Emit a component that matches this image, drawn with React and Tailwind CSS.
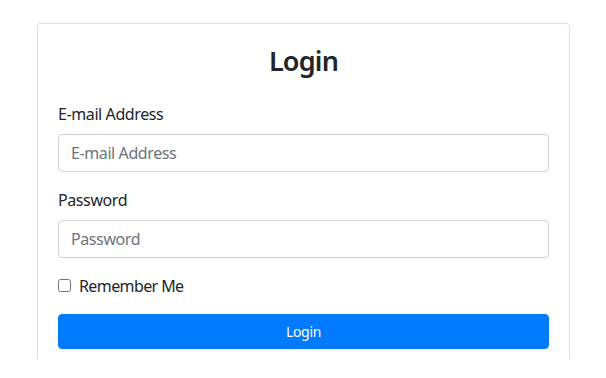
export default function App() {
  return (
    <div className="min-h-[378px] bg-white text-[#212529]" style={{ fontFamily: '"Noto Sans", "Open Sans", sans-serif' }}>
      <div className="pt-[23px]">
        <div className="ml-[37px] w-[533px] rounded-t-[4px] border border-b-0 border-[#dfdfdf] px-[20px] pt-[20px] pb-[10px]">
          <h3 className="mb-[24px] text-center text-[27px] font-semibold leading-[33.6px] tracking-[-0.8px]">Login</h3>
          <div className="mb-[16px]">
            <label className="mb-[8px] block text-[16px] leading-[24px] tracking-[-0.4px]">E-mail Address</label>
            <input
              type="email"
              placeholder="E-mail Address"
              className="block h-[38px] w-full rounded-[4px] border border-[#ced4da] px-[12px] py-[6px] text-[16px] leading-[24px] tracking-[-0.4px] text-[#495057] outline-none placeholder:text-[#6c757d]"
            />
          </div>
          <div className="mb-[16px]">
            <label className="mb-[8px] block text-[16px] leading-[24px] tracking-[-0.4px]">Password</label>
            <input
              type="password"
              placeholder="Password"
              className="block h-[38px] w-full rounded-[4px] border border-[#ced4da] px-[12px] py-[6px] text-[16px] leading-[24px] tracking-[-0.4px] text-[#495057] outline-none placeholder:text-[#6c757d]"
            />
          </div>
          <div className="mb-[16px] flex h-[24px] items-center">
            <input type="checkbox" className="m-0 h-[13px] w-[13px]" />
            <label className="ml-[8px] text-[16px] leading-[24px] tracking-[-0.6px]">Remember Me</label>
          </div>
          <button className="block h-[35px] w-full rounded-[4px] border border-[#007bff] bg-[#007bff] text-[14px] leading-[21px] tracking-[-0.3px] text-white">
            Login
          </button>
        </div>
      </div>
    </div>
  );
}
